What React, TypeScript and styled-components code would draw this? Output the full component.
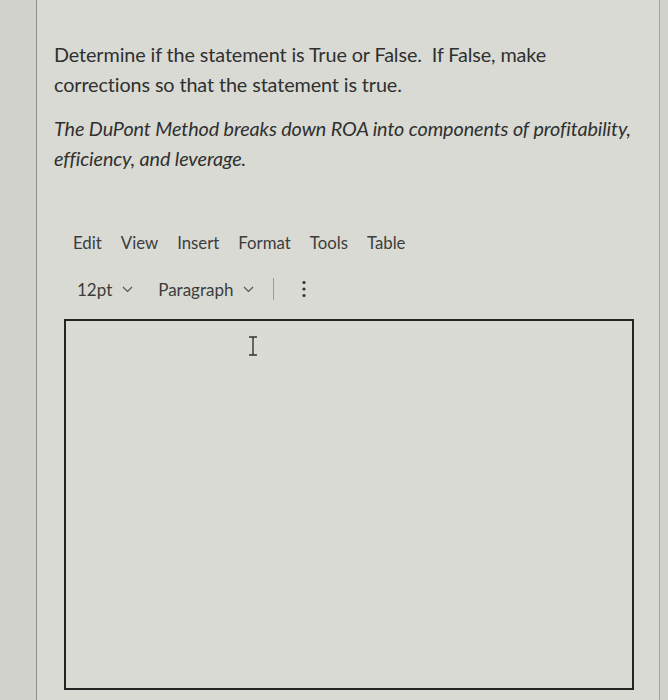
import React from 'react';
import styled, { createGlobalStyle } from 'styled-components';

const GlobalStyle = createGlobalStyle`
  html, body {
    margin: 0;
    padding: 0;
    background: #d1d2cc;
  }
  body {
    font-family: Lato, "Open Sans", sans-serif;
  }
`;

const Page = styled.div`
  width: 668px;
  height: 700px;
  overflow: hidden;
  padding: 0 8px 0 36px;
  box-sizing: border-box;
`;

const Panel = styled.div`
  height: 700px;
  background: #d9dad4;
  border-left: 1px solid #8d8e8a;
  border-right: 1px solid #a3a4a0;
  padding: 39px 0 0 17px;
  box-sizing: border-box;
`;

const Prompt = styled.p<{ $italic?: boolean }>`
  margin: 0 0 14px;
  font-size: 19.8px;
  line-height: 30px;
  color: #2f302f;
  font-style: ${(p) => (p.$italic ? 'italic' : 'normal')};
  letter-spacing: -0.1px;
`;

const MenuBar = styled.div`
  display: flex;
  gap: 19px;
  margin: 58px 0 0 19px;
  font-size: 16.8px;
  line-height: 24px;
  color: #3c3d3b;
`;

const MenuItem = styled.span``;

const Toolbar = styled.div`
  display: flex;
  align-items: center;
  margin: 22px 0 0 23px;
  font-size: 17px;
  color: #3c3d3b;
  height: 24px;
`;

const Select = styled.span<{ $gap: number }>`
  display: flex;
  align-items: center;
  gap: 10px;
  margin-right: ${(p) => p.$gap}px;
`;

const Divider = styled.span`
  width: 1px;
  height: 22px;
  background: #9c9d99;
  margin-right: 28px;
`;

const Editor = styled.div`
  position: relative;
  margin: 18px 0 0 10px;
  width: 566px;
  height: 367px;
  border: 2px solid #232423;
  background: #dadbd5;
`;

const Cursor = styled.svg`
  position: absolute;
  left: 182px;
  top: 15px;
`;

const Chevron = () => (
  <svg width="11" height="7" viewBox="0 0 11 7" fill="none">
    <path d="M1 1l4.5 4.5L10 1" stroke="#555" strokeWidth="1.2" />
  </svg>
);

const Kebab = () => (
  <svg width="4" height="18" viewBox="0 0 4 18">
    <circle cx="2" cy="2.5" r="1.6" fill="#333" />
    <circle cx="2" cy="9" r="1.6" fill="#333" />
    <circle cx="2" cy="15.5" r="1.6" fill="#333" />
  </svg>
);

export default function App() {
  return (
    <>
      <GlobalStyle />
      <Page>
        <Panel>
          <Prompt>
            Determine if the statement is True or False.&nbsp; If False, make
            <br />
            corrections so that the statement is true.
          </Prompt>
          <Prompt $italic>
            The DuPont Method breaks down ROA into components of profitability,
            <br />
            efficiency, and leverage.
          </Prompt>
          <MenuBar>
            <MenuItem>Edit</MenuItem>
            <MenuItem>View</MenuItem>
            <MenuItem>Insert</MenuItem>
            <MenuItem>Format</MenuItem>
            <MenuItem>Tools</MenuItem>
            <MenuItem>Table</MenuItem>
          </MenuBar>
          <Toolbar>
            <Select $gap={25}>
              12pt <Chevron />
            </Select>
            <Select $gap={19}>
              Paragraph <Chevron />
            </Select>
            <Divider />
            <Kebab />
          </Toolbar>
          <Editor>
            <Cursor width="10" height="20" viewBox="0 0 10 20" fill="none">
              <path d="M1 1h8M5 1v18M1 19h8" stroke="#333" strokeWidth="1.4" />
            </Cursor>
          </Editor>
        </Panel>
      </Page>
    </>
  );
}
